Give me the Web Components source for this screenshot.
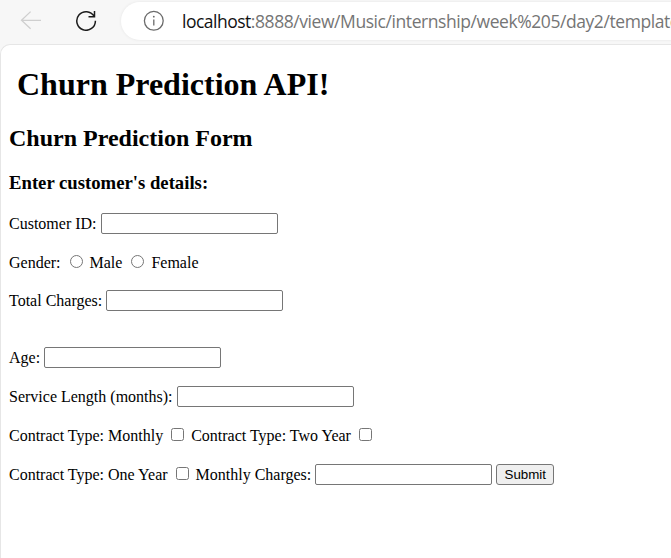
<!DOCTYPE html>
<html lang="en">
<head>
<meta charset="utf-8">
<title>Churn Prediction</title>
<style>
html,body{margin:0;height:100%;overflow:hidden;background:#f7f7f7}
</style>
</head>
<body>
<churn-app></churn-app>
<script>
const define = (name, html) => {
  const t = document.createElement('template');
  t.innerHTML = html;
  customElements.define(name, class extends HTMLElement {
    constructor() {
      super();
      this.attachShadow({mode: 'open'}).append(t.content.cloneNode(true));
    }
  });
};

define('address-bar', `
<style>
:host{flex:1;min-width:0;display:flex;align-items:center;height:38px;background:#fff;border-radius:19px 0 0 19px;box-shadow:0 0 2px 1px #eee;overflow:hidden;box-sizing:border-box;padding-left:22px}
svg{flex:none;margin-right:17px}
.url{white-space:nowrap;font:17.5px/24px "Open Sans","Noto Sans",sans-serif;letter-spacing:-.43px;color:#757575}
::slotted(b){font-weight:400;color:#111;letter-spacing:-.5px}
</style>
<svg width="22" height="22" viewBox="0 0 22 22" fill="none" stroke="#6b6b6b" stroke-width="1.3"><circle cx="10.8" cy="10.8" r="9.4"/><path d="M10.8 9.6v6"/><circle cx="10.8" cy="6.7" r=".9" fill="#6b6b6b" stroke="none"/></svg>
<span class="url"><slot></slot></span>`);

define('browser-toolbar', `
<style>
:host{display:flex;height:44px;box-sizing:border-box;padding:2px 0 0 20px;background:#f7f7f7}
svg{flex:none}
.back{margin:7px 33px 0 0}
.reload{margin:7px 24px 0 0}
</style>
<svg class="back" width="22" height="22" viewBox="0 0 22 22" fill="none" stroke="#cfcfcf" stroke-width="1.3"><path d="M21 11.3H1.5M10.6 2.6L1.5 11.3L10.6 19.8"/></svg>
<svg class="reload" width="22" height="22" viewBox="0 0 22 22" fill="none" stroke="#1c1c1c" stroke-width="1.5"><path d="M19.1 7.2A9.3 9.3 0 1 0 20.4 11.8M19.5 2v5.7h-6"/></svg>
<slot></slot>`);

define('form-row', `
<style>
:host{display:block;height:21px;line-height:21px;margin-bottom:18px;white-space:nowrap}
:host([wide]){margin-bottom:36px}
:host([tight]){margin-bottom:17px}
</style><slot></slot>`);

define('text-field', `
<style>
:host{display:inline-block;vertical-align:top;height:21px}
input{display:block;box-sizing:border-box;width:177px;height:21px;margin:0;border:1px solid #767676;border-radius:2px;background:#fff}
</style><input type="text">`);

define('choice-mark', `
<style>
:host{display:inline-block;vertical-align:top;box-sizing:border-box;width:13px;height:13px;margin:3px 3px 0 5px;border:1px solid #767676;border-radius:2.5px;background:#fff}
:host([round]){border-radius:50%}
:host([check]){margin-left:4px;margin-right:3px}
</style>`);

define('submit-button', `
<style>
:host{display:inline-block;vertical-align:top;height:21px}
button{display:block;box-sizing:border-box;width:58px;height:21px;padding:0;border:1px solid #767676;border-radius:3px;background:#efefef;color:#000;font:13.333px/18px "Liberation Sans",Arial,sans-serif}
</style><button type="button"><slot></slot></button>`);

define('page-view', `
<style>
:host{flex:1;display:block;box-sizing:border-box;background:#fff;border:solid #e6e6e6;border-width:1px 0 0 1px;border-radius:10px 0 0 0;padding:21px 0 0 8px;color:#000;font:16px/18px "Liberation Serif","Times New Roman",serif}
</style><slot></slot>`);

define('page-heading', `
<style>
:host{display:block;font-weight:700;white-space:nowrap;font-size:24px;line-height:28px;margin-bottom:20px}
:host([level="1"]){font-size:32px;line-height:36px;padding-left:8px;margin-bottom:22px}
:host([level="3"]){font-size:18.72px;line-height:22px;margin-bottom:19px}
</style><slot></slot>`);

define('churn-app', `
<style>:host{display:flex;flex-direction:column;height:100vh;overflow:hidden}</style>
<browser-toolbar><address-bar><b>localhost</b>:8888/view/Music/internship/week%205/day2/template</address-bar></browser-toolbar>
<page-view>
<page-heading level="1">Churn Prediction API!</page-heading>
<page-heading level="2">Churn Prediction Form</page-heading>
<page-heading level="3">Enter customer's details:</page-heading>
<form-row>Customer ID: <text-field></text-field></form-row>
<form-row tight>Gender: <choice-mark round></choice-mark> Male <choice-mark round></choice-mark> Female</form-row>
<form-row wide>Total Charges: <text-field></text-field></form-row>
<form-row>Age: <text-field></text-field></form-row>
<form-row>Service Length (months): <text-field></text-field></form-row>
<form-row>Contract Type: Monthly <choice-mark check></choice-mark> Contract Type: Two Year <choice-mark check></choice-mark></form-row>
<form-row>Contract Type: One Year <choice-mark check></choice-mark> Monthly Charges: <text-field></text-field> <submit-button>Submit</submit-button></form-row>
</page-view>`);
</script>
</body>
</html>
